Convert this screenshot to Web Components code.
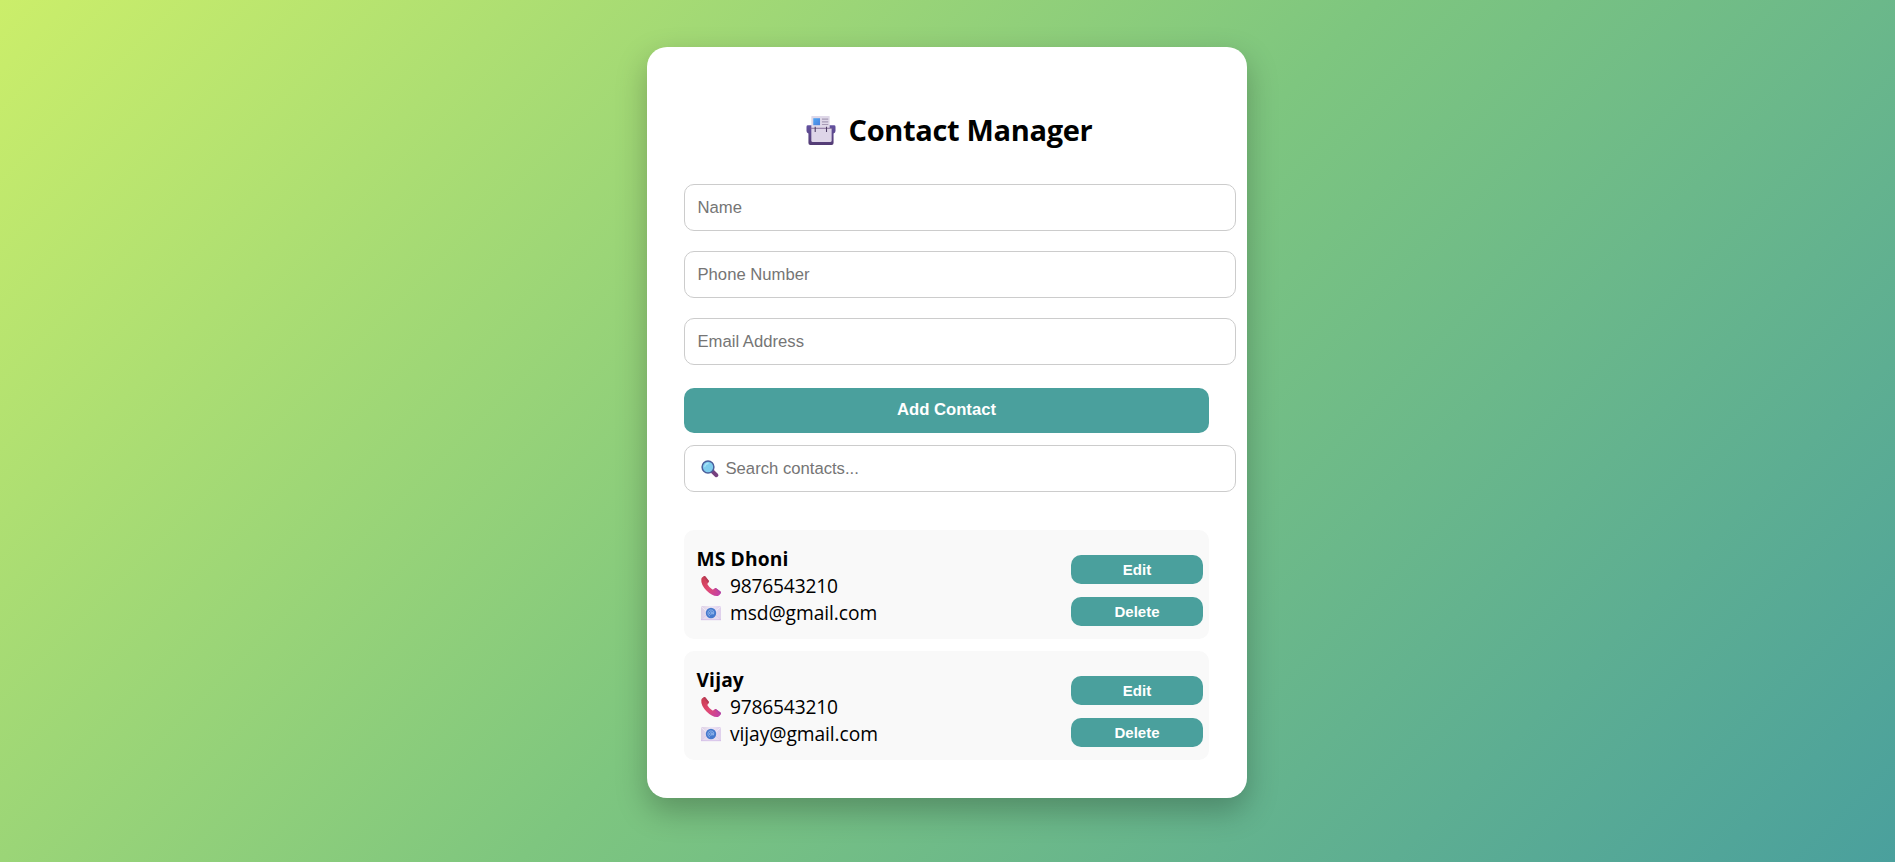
<!DOCTYPE html>
<html lang="en">
<head>
<meta charset="utf-8">
<title>Contact Manager</title>
<style>
html,body{margin:0;height:100%}
body{font-family:"Open Sans","Noto Sans",sans-serif;color:#000}
</style>
</head>
<body>
<contact-manager></contact-manager>
<script>
const define=(name,html,setup)=>customElements.define(name,class extends HTMLElement{
  connectedCallback(){
    if(this.shadowRoot)return;
    const root=this.attachShadow({mode:'open'});
    const t=document.createElement('template');
    t.innerHTML=html;
    root.append(t.content.cloneNode(true));
    if(setup)setup(this,root);
  }
});

const icons={
  index:`<svg viewBox="0 0 30 30"><defs><linearGradient id="b" x2="0" y2="1"><stop stop-color="#6352a0"/><stop offset="1" stop-color="#533b73"/></linearGradient><linearGradient id="p" x2="1" y2="1"><stop stop-color="#50a8f5"/><stop offset="1" stop-color="#4a7fdc"/></linearGradient></defs><path d="M1.500 9.500H28.500Q30 9.500 30 11v4.500q0 2-2 2.500V28Q28 30 26 30H4Q2 30 2 28V18Q0 17.500 0 15.500V11Q0 9.500 1.500 9.500Z" fill="url(#b)"/><path d="M5 .5Q5 0 5.500 0H23.500Q24 0 24 .5V13H5Z" fill="#dfd8e8"/><path d="M7 2.300h7V9.500H7Z" fill="url(#p)"/><path d="M16 3.200h6.500M16 6h6.500M16 8.800h6.500" stroke="#a79bb5" stroke-width="1.200"/><path d="M5 12.500H26V25.500Q26 27 24.500 27H6.500Q5 27 5 25.500Z" fill="#ded5e8"/><path d="M4 12.700H27" stroke="#77608f" stroke-width=".9"/><path d="M9 11v5.500M20.700 11v5.500" stroke="#4b3b63" stroke-width="1.100"/></svg>`,
  search:`<svg viewBox="0 0 18 18"><path d="M11.800 11.800l3.600 3.400" stroke="#76417f" stroke-width="4" stroke-linecap="round"/><circle cx="7" cy="7" r="5.900" fill="#7fcdee" stroke="#4b5f9b" stroke-width="1.500"/><path d="M3.800 6.500Q4.200 3.800 7 3.500" fill="none" stroke="#a8e3f7" stroke-width="1.300" stroke-linecap="round"/></svg>`,
  phone:`<svg viewBox="0 0 20 20"><defs><linearGradient id="g" x2="1" y2="1"><stop stop-color="#c73a4c"/><stop offset=".5" stop-color="#e14a72"/><stop offset="1" stop-color="#bd3fae"/></linearGradient></defs><path d="M1.300 1.300L3 .2Q3.800-.2 4.400.5L7.600 4.400Q8.200 5.200 7.600 6L6.600 7.400Q6.300 8 6.700 8.700Q8.400 11.600 11.100 13.300Q11.800 13.700 12.400 13.300L13.900 12.300Q14.700 11.800 15.500 12.400L19.500 15.500Q20.200 16.100 19.800 17L18.900 18.600Q18.200 19.600 16.900 19.900Q11.500 20.600 5.500 14.500Q-.3 8.500.3 3Q.5 1.900 1.300 1.300Z" fill="url(#g)"/><path d="M3 .2Q3.800-.2 4.400.5L7.600 4.400Q8.200 5.200 7.600 6L7 6.700L2.300.7Z" fill="#b53d57"/><path d="M13.600 12.500Q14.700 11.800 15.500 12.400L19.500 15.500Q20.200 16.100 19.800 17L19.300 17.800Z" fill="#b244a4"/></svg>`,
  mail:`<svg viewBox="0 0 20 14"><defs><linearGradient id="e" x2="1"><stop stop-color="#dccfe4"/><stop offset=".5" stop-color="#efe7f4"/><stop offset="1" stop-color="#dfd0ec"/></linearGradient></defs><rect width="20" height="14" rx=".6" fill="url(#e)"/><path d="M0 13.600L7 7.500H13L20 13.600" fill="#e6dbef" stroke="#d6c5e5" stroke-width=".5"/><path d="M0 .4L10 9L20 .4" fill="none" stroke="#fbf7fd" stroke-width=".6"/><path d="M0 13.700H20" stroke="#cdb4e6" stroke-width=".6"/><circle cx="10" cy="7" r="5.200" fill="#4679cd"/><circle cx="9.800" cy="7" r="1.300" fill="none" stroke="#a9c8f5" stroke-width=".7"/><path d="M11.200 5.500V7.500Q11.500 8.500 12.500 8Q13.500 5.500 11.500 4.200Q8.500 3 7 5.700Q6.200 9 9 10.200" fill="none" stroke="#a9c8f5" stroke-width=".7"/></svg>`
};

define('app-icon','<style>:host{display:block;flex:none}svg{display:block;width:100%;height:100%;overflow:visible}</style>',
  (el,root)=>root.append(document.createRange().createContextualFragment(icons[el.getAttribute('name')])));

define('text-field',`<style>
:host{display:flex;align-items:center;box-sizing:border-box;width:552px;height:47px;padding:0 12.500px;border:1px solid #ccc;border-radius:10px;background:#fff;color:#757575;font:16.670px "Liberation Sans",Arial,sans-serif}
span{white-space:pre}
::slotted(app-icon){width:18px;height:18px;margin:0 7px 0 3px}
</style><slot name="icon"></slot><span><slot></slot></span>`);

define('action-button',`<style>
:host{display:block}
button{display:block;width:100%;height:100%;margin:0;padding:0;border:0;border-radius:10px;background:#4aa09d;color:#fff;font:bold var(--size,16.670px)/1 "Liberation Sans",Arial,sans-serif}
</style><button><slot></slot></button>`);

define('contact-card',`<style>
:host{display:flex;justify-content:space-between;box-sizing:border-box;height:109px;padding:15px 6px 0 12.500px;border-radius:10px;background:#f9f9f9;font-size:19.200px;line-height:27px}
.name{font-weight:700;font-size:19.200px;letter-spacing:.15px}
.line{display:flex;align-items:center;height:27px}
.line app-icon{width:20px;height:20px;margin:0 9.500px 0 4px}
.line app-icon.mail{height:14px}
.ph{letter-spacing:-.2px}
.em{letter-spacing:-.06px}
.actions{display:grid;grid-template-rows:29px 29px;gap:13px;width:132px;padding-top:10px;--size:15px}
</style>
<div><div class="name"><slot name="name"></slot></div>
<div class="line"><app-icon name="phone"></app-icon><span class="ph"><slot name="phone"></slot></span></div>
<div class="line"><app-icon class="mail" name="mail"></app-icon><span class="em"><slot name="email"></slot></span></div></div>
<div class="actions"><action-button>Edit</action-button><action-button>Delete</action-button></div>`);

define('contact-manager',`<style>
:host{display:flex;justify-content:center;box-sizing:border-box;height:862px;padding:47px 1px 0 0;background:linear-gradient(135deg,#cbee6a,#7ec67f 50%,#4aa09d);overflow:hidden}
main{box-sizing:border-box;width:600px;height:751px;padding:62px 38px 0 37px;border-radius:20px;background:#fff;box-shadow:0 12.500px 31px rgba(0,0,0,.25)}
h1{display:flex;align-items:center;justify-content:center;height:44px;margin:-1px 0 32px;padding-left:5px;font-size:29px;line-height:44px;font-weight:700;letter-spacing:-.33px}
h1 app-icon{width:30px;height:29px;margin:0 13px 0 0}
.form{display:grid;gap:20px}
.add{height:45px;margin:23px 0 12px}
.list{display:grid;gap:12px;margin-top:38px}
</style>
<main>
<h1><app-icon name="index"></app-icon><span>Contact Manager</span></h1>
<div class="form"><text-field>Name</text-field><text-field>Phone Number</text-field><text-field>Email Address</text-field></div>
<action-button class="add">Add Contact</action-button>
<text-field><app-icon slot="icon" name="search"></app-icon>Search contacts...</text-field>
<div class="list">
<contact-card><span slot="name">MS Dhoni</span><span slot="phone">9876543210</span><span slot="email">msd@gmail.com</span></contact-card>
<contact-card><span slot="name">Vijay</span><span slot="phone">9786543210</span><span slot="email">vijay@gmail.com</span></contact-card>
</div>
</main>`);
</script>
</body>
</html>
